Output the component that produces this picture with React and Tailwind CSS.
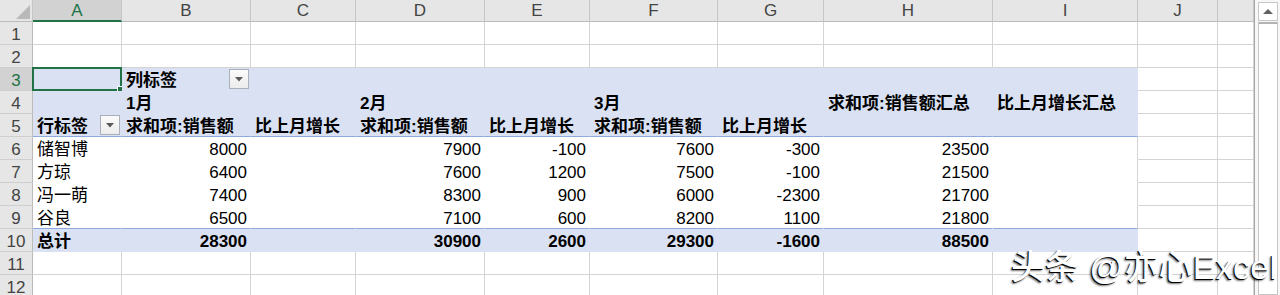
import React from 'react';

const COLS = [
  { key: 'A', w: 'w-[89px]' },
  { key: 'B', w: 'w-[129px]' },
  { key: 'C', w: 'w-[105px]' },
  { key: 'D', w: 'w-[129px]' },
  { key: 'E', w: 'w-[105px]' },
  { key: 'F', w: 'w-[128px]' },
  { key: 'G', w: 'w-[106px]' },
  { key: 'H', w: 'w-[169px]' },
  { key: 'I', w: 'w-[145px]' },
  { key: 'J', w: 'w-[80px]' },
  { key: 'K', w: 'w-[36px]' },
];

const people = [
  ['储智博', '8000', '', '7900', '-100', '7600', '-300', '23500', ''],
  ['方琼', '6400', '', '7600', '1200', '7500', '-100', '21500', ''],
  ['冯一萌', '7400', '', '8300', '900', '6000', '-2300', '21700', ''],
  ['谷良', '6500', '', '7100', '600', '8200', '1100', '21800', ''],
];
const totals = ['总计', '28300', '', '30900', '2600', '29300', '-1600', '88500', ''];

// cell contents keyed by row number, then column index (A = 0)
function contentFor(r, ci) {
  if (r === 3 && ci === 1) return { t: '列标签', b: true, btn: true };
  if (r === 4) {
    const m = { 1: '1月', 3: '2月', 5: '3月', 7: '求和项:销售额汇总', 8: '比上月增长汇总' };
    if (m[ci]) return { t: m[ci], b: true };
  }
  if (r === 5) {
    const m = {
      0: '行标签',
      1: '求和项:销售额',
      2: '比上月增长',
      3: '求和项:销售额',
      4: '比上月增长',
      5: '求和项:销售额',
      6: '比上月增长',
    };
    if (m[ci]) return { t: m[ci], b: true, btn: ci === 0 };
  }
  if (r >= 6 && r <= 9 && ci <= 8) {
    const v = people[r - 6][ci];
    return v ? { t: v, right: ci > 0 } : null;
  }
  if (r === 10 && ci <= 8) {
    const v = totals[ci];
    return v ? { t: v, right: ci > 0, b: true } : null;
  }
  return null;
}

function skin(r, ci) {
  const inPivot = ci <= 8 && r >= 3 && r <= 10;
  if (!inPivot) return 'bg-white border-r-[#d4d4d4] border-b-[#d4d4d4]';
  if (r === 3 || r === 4 || r === 10) return 'bg-[#d9e1f2] border-r-[#d9e1f2] border-b-[#d9e1f2]';
  if (r === 5) return 'bg-[#d9e1f2] border-r-[#d9e1f2] border-b-[#8ea9db]';
  const right = ci === 8 ? 'border-r-[#d4d4d4]' : 'border-r-white';
  const bottom = r === 9 ? 'border-b-[#8ea9db]' : 'border-b-white';
  return `bg-white ${right} ${bottom}`;
}

function FilterButton() {
  return (
    <span className="ml-auto mr-[1px] self-start mt-[1px] w-[20px] h-[20px] shrink-0 flex items-center justify-center border border-[#a9b0ba] bg-gradient-to-b from-[#fbfbfb] to-[#ececec]">
      <svg width="8" height="5" viewBox="0 0 8 5">
        <polygon points="0,0 8,0 4,4.5" fill="#5a5a5a" />
      </svg>
    </span>
  );
}

function Cell({ r, ci, col }) {
  const c = contentFor(r, ci);
  const selected = r === 3 && ci === 0;
  return (
    <div
      className={`relative flex items-end h-[23px] shrink-0 border-r border-b whitespace-nowrap ${col.w} ${skin(r, ci)} ${
        c && c.right ? 'justify-end pr-[3px]' : 'pl-[4px]'
      }`}
    >
      {c && (
        <span className={`leading-[16px] pb-[1px] ${c.b ? 'font-bold' : 'font-normal'}`}>{c.t}</span>
      )}
      {c && c.btn && <FilterButton />}
      {selected && (
        <div className="absolute left-[-1px] top-[-1px] w-[90px] h-[24px] border-2 border-[#217346]">
          <div className="absolute right-[-4px] bottom-[-4px] w-[7px] h-[7px] bg-[#217346] border border-white" />
        </div>
      )}
    </div>
  );
}

function HeaderRow() {
  return (
    <div className="flex h-[22px] shrink-0">
      <div className="w-[33px] h-[22px] shrink-0 bg-[#e6e6e6] border-r border-b border-r-[#c6c6c6] border-b-[#bcbcbc] relative">
        <svg className="absolute left-0 top-0" width="33" height="22" viewBox="0 0 33 22">
          <polygon points="30,5 30,19 16,19" fill="#b9b9b9" />
        </svg>
      </div>
      {COLS.map((col, i) => {
        const sel = i === 0;
        return (
          <div
            key={col.key}
            className={`h-[22px] shrink-0 flex items-center justify-center border-r ${col.w} ${
              sel
                ? 'bg-[#d2d2d2] text-[#217346] border-r-[#c6c6c6] border-b-2 border-b-[#217346]'
                : 'bg-[#e6e6e6] text-[#444444] border-r-[#c6c6c6] border-b border-b-[#bcbcbc]'
            }`}
          >
            {col.key !== 'K' && <span className="leading-[20px] pt-[1px]">{col.key}</span>}
          </div>
        );
      })}
    </div>
  );
}

function GridRow({ r }) {
  const sel = r === 3;
  return (
    <div className="flex h-[23px] shrink-0">
      <div
        className={`w-[33px] h-[23px] shrink-0 flex items-end justify-center border-r border-b border-r-[#bcbcbc] border-b-[#cfcfcf] ${
          sel ? 'bg-[#d2d2d2] text-[#217346]' : 'bg-[#e6e6e6] text-[#444444]'
        }`}
      >
        <span className="leading-[16px] pb-[1px]">{r}</span>
      </div>
      {COLS.map((col, ci) => (
        <Cell key={col.key} r={r} ci={ci} col={col} />
      ))}
    </div>
  );
}

function Scrollbar() {
  return (
    <div className="w-[26px] h-full shrink-0 flex flex-col items-center pl-[1px] pt-[2px] bg-[#f7f7f7] border-l border-l-[#a6a6a6]">
      <div className="w-[20px] h-[19px] shrink-0 flex items-center justify-center bg-white border border-[#c6c6c6]">
        <svg width="10" height="5" viewBox="0 0 10 5">
          <polygon points="5,0 10,5 0,5" fill="#606060" />
        </svg>
      </div>
      <div className="w-[20px] flex-1 mt-[1px] bg-white border border-[#c6c6c6] border-t-2 border-t-[#b3b3b3]" />
    </div>
  );
}

export default function App() {
  const rows = [1, 2, 3, 4, 5, 6, 7, 8, 9, 10, 11, 12];
  return (
    <div className="relative w-[1280px] h-[295px] overflow-hidden bg-white flex text-[17px] text-black font-['Liberation_Sans','Noto_Sans_CJK_SC',sans-serif]">
      <div className="w-[1254px] shrink-0 flex flex-col">
        <HeaderRow />
        {rows.map((r) => (
          <GridRow key={r} r={r} />
        ))}
      </div>
      <Scrollbar />
      <div className="absolute left-[1011px] top-[250px] text-[34px] leading-none tracking-[0.3px] whitespace-nowrap text-white font-medium [text-shadow:-1px_1px_0_#000,-2px_2px_2px_rgba(0,0,0,0.55)]">
        头条 @亦心Excel
      </div>
    </div>
  );
}
